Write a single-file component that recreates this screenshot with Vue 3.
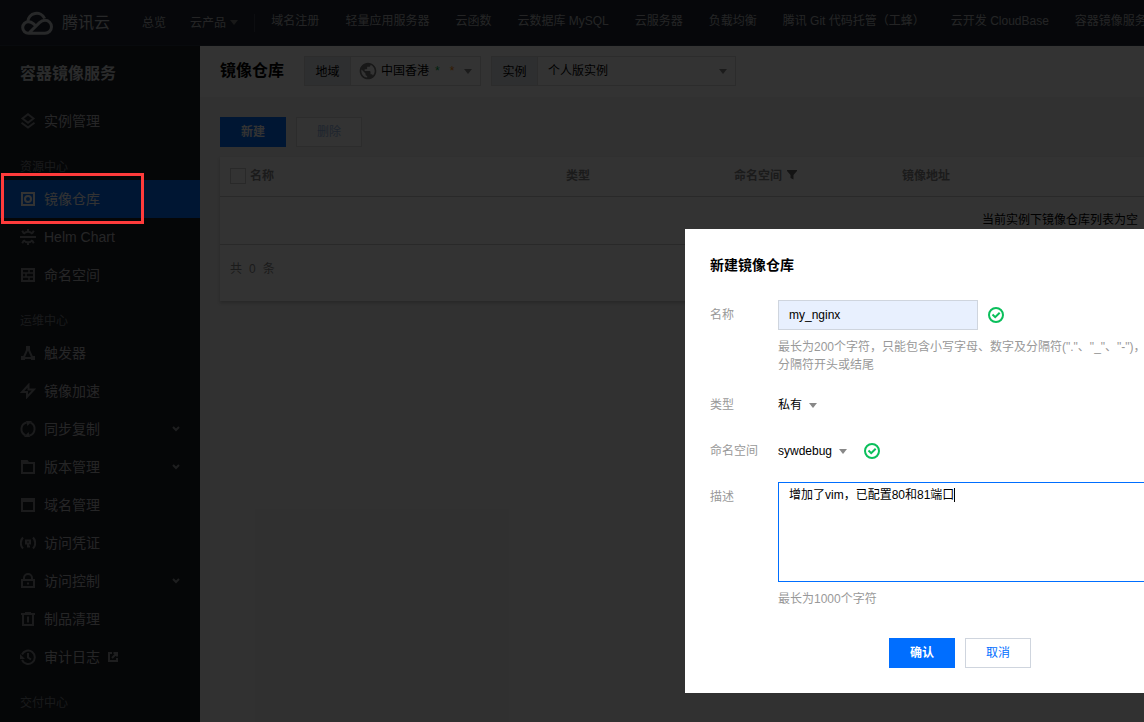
<template>
  <div class="console">
    <header class="topbar">
      <a href="#" class="logo">
        <svg width="34" height="24" viewBox="0 0 34 24" fill="none" stroke="currentColor" stroke-width="3" aria-hidden="true">
          <path d="M16.500 15.500 13.300 12.600C11.800 11.300 10.300 10.700 8.500 10.700a5.800 5.800 0 0 0 0 11.600H25a6.500 6.500 0 0 0 0-13c-2.500 0-4 1-5.500 2.400L9.500 21.500" />
          <path d="M7.800 10.500a8.800 8.800 0 0 1 16.800-3" />
        </svg>
        <span>腾讯云</span>
      </a>
      <nav class="main-nav">
        <a href="#">总览</a>
        <a href="#">云产品 <i class="caret"></i></a>
      </nav>
      <nav class="quick-nav">
        <a v-for="item in quickLinks" :key="item" href="#">{{ item }}</a>
      </nav>
    </header>

    <div class="body">
      <aside class="sidebar">
        <h2>容器镜像服务</h2>
        <template v-for="group in menu" :key="group.title">
          <h3 v-if="group.title">{{ group.title }}</h3>
          <a
            v-for="item in group.items"
            :key="item.name"
            href="#"
            class="menu-item"
            :class="{ active: item.name === current }"
            @click.prevent="current = item.name"
          >
            <svg class="menu-icon" width="16" height="16" viewBox="0 0 16 16" v-html="item.icon"></svg>
            <span>{{ item.name }}</span>
            <svg v-if="item.external" class="external" width="10" height="10" viewBox="0 0 10 10">
              <path d="M4 1H1v8h8V6M5.500 1H9v3.500M9 1 4 6" />
            </svg>
            <svg v-if="item.more" class="arrow" width="8" height="6" viewBox="0 0 8 6">
              <path d="m1 1 3 3 3-3" />
            </svg>
          </a>
        </template>
      </aside>

      <main class="content">
        <div class="title-bar">
          <h1>镜像仓库</h1>
          <div class="filter">
            <label for="region">地域</label>
            <div class="filter-value region">
              <svg class="globe" width="20" height="20" viewBox="0 0 24 24" aria-hidden="true">
                <path d="M12 2C6.480 2 2 6.480 2 12s4.480 10 10 10 10-4.480 10-10S17.520 2 12 2zm-1 17.930c-3.950-.49-7-3.850-7-7.930 0-.62.08-1.210.21-1.790L9 15v1c0 1.100.9 2 2 2v1.930zm6.900-2.540c-.26-.81-1-1.390-1.900-1.390h-1v-3c0-.55-.45-1-1-1H8v-2h2c.55 0 1-.45 1-1V7h2c1.100 0 2-.9 2-2v-.41c2.930 1.190 5 4.060 5 7.410 0 2.080-.8 3.970-2.100 5.390z" />
              </svg>
              <select id="region"><option>中国香港</option></select>
              <span class="star green">*</span>
              <span class="star orange">*</span>
              <i class="caret"></i>
            </div>
          </div>
          <div class="filter">
            <label for="instance">实例</label>
            <div class="filter-value instance">
              <select id="instance"><option>个人版实例</option></select>
              <i class="caret"></i>
            </div>
          </div>
        </div>

        <div class="panel">
          <div class="actions">
            <button type="button" class="btn primary">新建</button>
            <button type="button" class="btn" disabled>删除</button>
          </div>
          <div class="card">
            <table>
              <thead>
                <tr>
                  <th class="col-name">
                    <label class="check-all"><input type="checkbox" />名称</label>
                  </th>
                  <th class="col-small">类型</th>
                  <th class="col-small">
                    命名空间
                    <svg class="funnel" width="10" height="10" viewBox="0 0 10 10"><path d="M0 0h10v1L6.500 5v4.500L3.500 8V5L0 1z" /></svg>
                  </th>
                  <th>镜像地址</th>
                </tr>
              </thead>
              <tbody>
                <tr>
                  <td colspan="4">当前实例下镜像仓库列表为空</td>
                </tr>
              </tbody>
            </table>
            <div class="pager"><span>共</span><span>0</span><span>条</span></div>
          </div>
        </div>
      </main>
    </div>

    <div class="mask">
      <form class="dialog" role="dialog" aria-labelledby="dialog-title" @submit.prevent>
        <h2 id="dialog-title">新建镜像仓库</h2>
        <div class="row">
          <label for="repo-name">名称</label>
          <div class="control">
            <div class="line">
              <input id="repo-name" v-model="form.name" type="text" />
              <svg class="ok" width="16" height="16" viewBox="0 0 16 16"><circle cx="8" cy="8" r="7" /><path d="m4.500 7.500 2.700 2.700 4.500-4.500" /></svg>
            </div>
            <p class="hint">最长为200个字符，只能包含小写字母、数字及分隔符("."、"_"、"-")，且不能以<br />分隔符开头或结尾</p>
          </div>
        </div>
        <div class="row">
          <label for="repo-type">类型</label>
          <div class="control line">
            <select id="repo-type" v-model="form.type"><option>私有</option></select>
            <i class="caret"></i>
          </div>
        </div>
        <div class="row">
          <label for="repo-space">命名空间</label>
          <div class="control line">
            <select id="repo-space" v-model="form.space"><option>sywdebug</option></select>
            <i class="caret"></i>
            <svg class="ok space-ok" width="16" height="16" viewBox="0 0 16 16"><circle cx="8" cy="8" r="7" /><path d="m4.500 7.500 2.700 2.700 4.500-4.500" /></svg>
          </div>
        </div>
        <div class="row">
          <label for="repo-desc">描述</label>
          <div class="control desc">
            <textarea id="repo-desc" v-model="form.desc"></textarea>
            <i class="cursor"></i>
            <p class="hint">最长为1000个字符</p>
          </div>
        </div>
        <div class="footer">
          <button type="submit" class="btn primary">确认</button>
          <button type="button" class="btn">取消</button>
        </div>
      </form>
    </div>

    <div class="highlight"></div>
  </div>
</template>

<script setup>
import { ref, reactive } from 'vue';

const quickLinks = [
  '域名注册',
  '轻量应用服务器',
  '云函数',
  '云数据库 MySQL',
  '云服务器',
  '负载均衡',
  '腾讯 Git 代码托管（工蜂）',
  '云开发 CloudBase',
  '容器镜像服务',
];

const current = ref('镜像仓库');

const menu = [
  {
    title: '',
    items: [
      { name: '实例管理', icon: '<path d="M8 1.200 13.500 5.500 8 9.800 2.500 5.500zM1.500 9.800 8 14.500l6.500-4.700"/>' },
    ],
  },
  {
    title: '资源中心',
    items: [
      { name: '镜像仓库', icon: '<path d="M2 2h12v12H2z"/><circle cx="8" cy="8" r="3"/>' },
      { name: 'Helm Chart', icon: '<path d="M0 8h16M3.500 5A5.500 5.500 0 0 1 12.500 5M3.500 11a5.500 5.500 0 0 0 9 0M8 2.500V0M8 13.500V16M3.700 4.200 2.200 1.800M12.300 4.200l1.500-2.400M3.700 11.800l-1.500 2.400M12.300 11.800l1.500 2.400"/>' },
      { name: '命名空间', icon: '<path d="M2 2h12v12H2z"/><path stroke-width="1.500" d="M2 6h12M2 10h12M9 2.500V6M6 6v4M9 10v3.500"/>' },
    ],
  },
  {
    title: '运维中心',
    items: [
      { name: '触发器', icon: '<path d="M8 3 3.500 13h9z"/><path class="solid" d="M6 1h4v4H6zM1 11h4v4H1zM11 11h4v4h-4z"/>' },
      { name: '镜像加速', icon: '<path d="M8.500 2 2 9h5v5l7-7.500H8.500z"/>' },
      { name: '同步复制', icon: '<path d="M5.500 14.300A6.800 6.800 0 0 1 6.500 1.500M10.500 1.700A6.800 6.800 0 0 1 9.500 14.500"/><path class="solid" d="M6 0h6L7.500 5zM10 16H4l4.500-5z"/>', more: true },
      { name: '版本管理', icon: '<path d="M2 2h5l1.500 2H14v10H2z"/><path class="solid" d="M1 1h6l2 4H1z"/>', more: true },
      { name: '域名管理', icon: '<path d="M2 2h12v12H2zM2 4h12"/><path class="solid" d="M1 1h14v4H1z"/>' },
      { name: '访问凭证', icon: '<path d="M3 2.500a8 8 0 0 0 0 11M13 2.500a8 8 0 0 1 0 11M6 5.500h4v3H6zM8 8.500v4M8 11.500h2"/>' },
      { name: '访问控制', icon: '<path d="M2 7h12v7H2zM4 7V5a4 4 0 0 1 8 0v2M8 9.500v2"/>', more: true },
      { name: '制品清理', icon: '<path d="M1 3h14M3 4v10h10V4M8 5.500v6M5 2h6"/>' },
      { name: '审计日志', icon: '<path d="M2 5.500A6.700 6.700 0 1 1 2 11M8 4v4.500l3 2"/><path class="solid" d="M0 5v5h5z"/>', external: true },
    ],
  },
  { title: '交付中心', items: [] },
];

const form = reactive({
  name: 'my_nginx',
  type: '私有',
  space: 'sywdebug',
  desc: '增加了vim，已配置80和81端口',
});
</script>

<style>
html,
body {
  margin: 0;
  height: 100%;
  overflow: hidden;
}
#app {
  height: 100%;
}
</style>

<style scoped>
/* desktop console, laid out for wide screens */
.console {
  position: relative;
  display: flex;
  flex-direction: column;
  min-width: 1920px;
  min-height: 100%;
  background: #f2f2f2;
  color: #000;
  font-family: "Liberation Sans", "Noto Sans CJK SC", sans-serif;
  font-size: 12px;
  line-height: 18px;
}
.console * {
  box-sizing: border-box;
}
a {
  color: inherit;
  text-decoration: none;
}
h1,
h2,
h3,
p {
  margin: 0;
}
input,
select,
textarea,
button {
  font: inherit;
  color: inherit;
}
select {
  appearance: none;
  border: 0;
  padding: 0;
  background: transparent;
}
.caret {
  flex: none;
  display: inline-block;
  border: 4px solid transparent;
  border-top: 5px solid #888;
  border-bottom: 0;
}

/* top bar */
.topbar {
  display: flex;
  align-items: center;
  height: 46px;
  padding-left: 20px;
  background: #1f2633;
  border-bottom: 1px solid #2b3240;
  color: #b4b6ba;
  white-space: nowrap;
  overflow: hidden;
}
.logo {
  display: flex;
  align-items: center;
  gap: 8px;
  width: 122px;
  font-size: 16px;
  color: #c4c6ca;
}
.main-nav {
  display: flex;
  gap: 24px;
  padding-right: 16px;
  border-right: 1px solid #3d4350;
}
.main-nav .caret {
  margin: 0 0 2px 1px;
  border-top-color: #777;
}
.quick-nav {
  display: flex;
  gap: 26px;
  padding: 0 16px 4px;
}

/* sidebar */
.body {
  flex: 1;
  display: flex;
}
.sidebar {
  width: 200px;
  background: #1a1e25;
  color: #b9bbbe;
}
.sidebar h2 {
  padding-left: 20px;
  font-size: 16px;
  line-height: 56px;
  color: #d2d4d8;
}
.sidebar h3 {
  padding: 14px 0 0 20px;
  font-size: 12px;
  font-weight: normal;
  line-height: 26px;
  color: #7b7e84;
}
.menu-item {
  display: flex;
  align-items: center;
  gap: 8px;
  height: 38px;
  padding: 0 20px;
  font-size: 14px;
}
.menu-item.active {
  background: #006eff;
  color: #fff;
}
.menu-icon {
  flex: none;
  fill: none;
  stroke: currentColor;
  stroke-width: 2;
  color: #85878b;
}
.menu-icon :deep(.solid) {
  fill: currentColor;
  stroke: none;
}
.active .menu-icon {
  color: #fff;
}
.external,
.arrow {
  fill: none;
  stroke: #94969a;
  stroke-width: 2;
}
.arrow {
  margin-left: auto;
}

/* content */
.content {
  flex: 1;
}
.title-bar {
  display: flex;
  gap: 10px;
  height: 51px;
  padding: 10px 20px;
  background: #fff;
}
.title-bar h1 {
  margin-right: 10px;
  font-size: 16px;
  line-height: 30px;
}
.filter {
  display: flex;
  height: 30px;
  border: 1px solid #ddd;
}
.filter label {
  width: 46px;
  text-align: center;
  line-height: 30px;
  background: #e5e8ed;
  border-right: 1px solid #ddd;
}
.filter-value {
  display: flex;
  align-items: center;
  padding: 0 8px 0 10px;
}
.filter-value.region {
  gap: 3px;
  width: 129px;
  padding-left: 7px;
}
.filter-value.instance {
  width: 197px;
}
.filter-value .caret {
  margin-left: auto;
}
.globe {
  flex: none;
  fill: #777;
}
.star {
  margin: 0 5px 0 2px;
}
.star.green {
  color: #00a849;
}
.star.orange {
  color: #ff8400;
}
.panel {
  padding: 20px;
}
.actions {
  display: flex;
  gap: 10px;
  margin-bottom: 10px;
}
.btn {
  width: 66px;
  height: 30px;
  padding: 0;
  border: 1px solid #cfd5de;
  background: #fff;
  color: #006eff;
}
.btn.primary {
  border-color: #006eff;
  background: #006eff;
  color: #fff;
  font-weight: bold;
}
.btn:disabled {
  border-color: #ddd;
  color: #94b4e4;
}
.card {
  background: #fff;
  box-shadow: 0 2px 3px rgba(0, 0, 0, 0.2);
}
table {
  width: 100%;
  table-layout: fixed;
  border-collapse: collapse;
}
th {
  height: 39px;
  padding: 0 10px;
  border-bottom: 1px solid #ccc;
  text-align: left;
  color: #888;
}
.col-name {
  width: 20%;
}
.col-small {
  width: 10%;
}
.check-all {
  display: flex;
  align-items: center;
  gap: 4px;
}
.check-all input {
  appearance: none;
  width: 16px;
  height: 16px;
  margin: 0;
  border: 1px solid #ccc;
}
.funnel {
  margin-left: 2px;
  fill: #666;
}
td {
  height: 48px;
  padding: 0;
  border-bottom: 1px solid #ccc;
  text-align: center;
}
.pager {
  display: flex;
  gap: 7px;
  height: 56px;
  padding: 15px 10px;
  color: #888;
}

/* dialog */
.mask {
  position: absolute;
  inset: 0;
  display: flex;
  justify-content: center;
  align-items: flex-start;
  padding-top: 229px;
  background: rgba(0, 0, 0, 0.8);
}
.dialog {
  width: 550px;
  padding: 25px;
  background: #fff;
}
.dialog h2 {
  margin-bottom: 24px;
  font-size: 14px;
  line-height: 22px;
}
.row {
  display: flex;
  margin-bottom: 16px;
}
.row > label {
  width: 68px;
  line-height: 30px;
  color: #999;
}
.control {
  flex: 1;
}
.line {
  display: flex;
  align-items: center;
  min-height: 30px;
}
.line .caret {
  margin-left: 6px;
}
.line input {
  width: 200px;
  height: 30px;
  margin-right: 10px;
  padding: 0 10px;
  border: 1px solid #cfd5de;
  background: #e8f0fe;
}
.ok {
  fill: none;
  stroke: #0abf5b;
  stroke-width: 2;
}
.space-ok {
  margin-left: 17px;
}
.hint {
  margin-top: 8px;
  white-space: nowrap;
  color: #999;
}
.desc {
  position: relative;
}
textarea {
  display: block;
  width: 100%;
  height: 100px;
  padding: 3px 10px;
  border: 1px solid #006eff;
  outline: 0;
  resize: none;
}
.cursor {
  position: absolute;
  left: 176px;
  top: 6px;
  width: 1px;
  height: 14px;
  background: #000;
}
.footer {
  display: flex;
  justify-content: center;
  gap: 10px;
  margin-top: 30px;
}

/* frame around the selected menu entry */
.highlight {
  position: absolute;
  left: 1px;
  top: 173px;
  width: 143px;
  height: 51px;
  border: 3px solid #ff3b3b;
}
</style>
